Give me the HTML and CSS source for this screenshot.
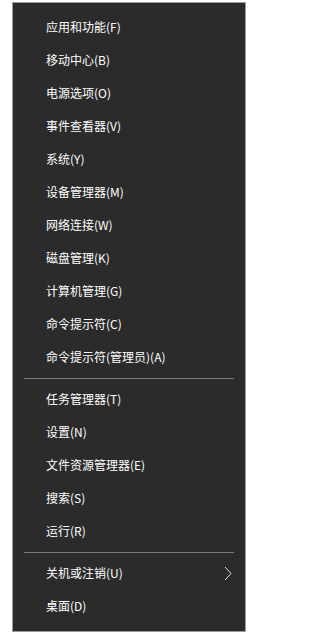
FILE: index.html
```html
<!DOCTYPE html>
<html lang="zh-CN">
<head>
<meta charset="utf-8">
<link rel="stylesheet" href="styles.css">
</head>
<body>
<div class="menu">
  <div class="item">应用和功能(F)</div>
  <div class="item">移动中心(B)</div>
  <div class="item">电源选项(O)</div>
  <div class="item">事件查看器(V)</div>
  <div class="item">系统(Y)</div>
  <div class="item">设备管理器(M)</div>
  <div class="item">网络连接(W)</div>
  <div class="item">磁盘管理(K)</div>
  <div class="item">计算机管理(G)</div>
  <div class="item">命令提示符(C)</div>
  <div class="item">命令提示符(管理员)(A)</div>
  <div class="sep"></div>
  <div class="item">任务管理器(T)</div>
  <div class="item">设置(N)</div>
  <div class="item">文件资源管理器(E)</div>
  <div class="item">搜索(S)</div>
  <div class="item">运行(R)</div>
  <div class="sep"></div>
  <div class="item has-sub"><span>关机或注销(U)</span>
    <svg class="chev" width="8" height="15" viewBox="0 0 8 15"><path d="M1 1 L7 7.5 L1 14" fill="none" stroke="#e6e6e6" stroke-width="1"/></svg>
  </div>
  <div class="item">桌面(D)</div>
</div>
</body>
</html>
```

FILE: styles.css
```css
html, body {
  margin: 0;
  padding: 0;
  background: #ffffff;
}
body {
  padding: 2px 0 0 12px;
}
.menu {
  width: 232px;
  border: 1px solid #9a9a9a;
  background: #2b2b2b;
  padding: 8px 0 8px 0;
  font-family: "Microsoft YaHei UI", "Noto Sans CJK SC", "Noto Sans", sans-serif;
  font-size: 12px;
  color: #ffffff;
}
.item {
  box-sizing: border-box;
  height: 33px;
  line-height: 32px;
  padding-bottom: 1px;
  padding-left: 33px;
  padding-right: 13px;
  white-space: nowrap;
}
.has-sub {
  display: flex;
  align-items: center;
  justify-content: space-between;
}
.chev {
  display: block;
  margin-top: 1px;
}
.sep {
  height: 1px;
  margin: 4px 11px;
  background: #7a7a7a;
}
```
